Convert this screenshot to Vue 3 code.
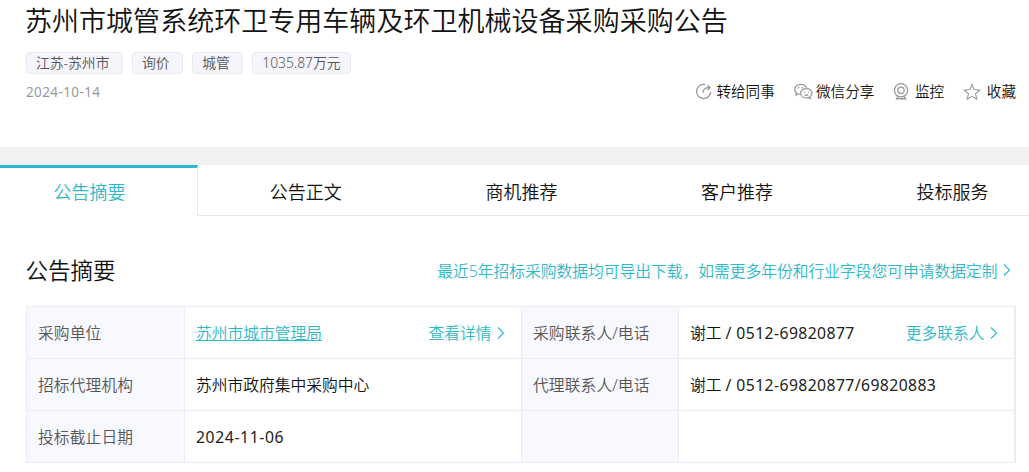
<template>
  <div class="page">
    <header class="notice">
      <h1>苏州市城管系统环卫专用车辆及环卫机械设备采购采购公告</h1>
      <div class="tags">
        <span v-for="tag in tags" :key="tag" class="tag">{{ tag }}</span>
      </div>
      <div class="meta">
        <span class="date">2024-10-14</span>
        <div class="actions">
          <a class="action share">
            <svg width="17" height="17" viewBox="0 0 17 17">
              <path d="M10.2 1.5A7.1 7.1 0 1 0 15.7 8.9" />
              <path d="M8 9.8C8 6.5 9.8 4.6 14.6 4.4M12.2 2.2l2.8 2.2-2.2 2.6" />
            </svg>
            <span>转给同事</span>
          </a>
          <a class="action wechat">
            <svg width="19" height="17" viewBox="0 0 19 17">
              <path d="M6.3 11.3c-.8 0-1.4-.1-2-.3L2.1 12l.5-2C1.4 9.1.8 7.8.8 6.4.8 3.6 3.4 1.3 6.7 1.3c2.9 0 5.2 1.6 5.8 3.9" />
              <path d="M12.3 5.6c-3.2 0-5.7 2-5.7 4.6s2.5 4.6 5.7 4.6c.7 0 1.4-.1 2-.3l2 1-.5-1.7c1.3-.9 2.2-2.1 2.2-3.6 0-2.6-2.5-4.6-5.7-4.6z" />
              <path d="M4.6 4v1.6M8.5 4v1.6M10.4 8.4v1.4M14.3 8.4v1.4M10.5 11.6q1.8 1.3 3.6 0" />
            </svg>
            <span>微信分享</span>
          </a>
          <a class="action watch">
            <svg width="16" height="17" viewBox="0 0 16 17">
              <circle cx="8" cy="7.3" r="6.6" />
              <circle cx="8" cy="7.3" r="3.2" />
              <path d="M5 13.4l-1.5 2.3h9L11 13.4M3 15.9h10" />
            </svg>
            <span>监控</span>
          </a>
          <a class="action star">
            <svg width="18" height="17" viewBox="0 0 18 17">
              <path d="M9 1.5l2.1 5.1 5.6.5-4.2 3.7 1.3 5.3L9 13.3l-4.8 2.8 1.3-5.3-4.2-3.7 5.6-.5z" />
            </svg>
            <span>收藏</span>
          </a>
        </div>
      </div>
    </header>

    <nav class="tabs">
      <a v-for="(tab, i) in tabs" :key="tab" :class="['tab', { active: i === 0 }]">{{ tab }}</a>
    </nav>

    <section class="summary">
      <div class="summary-head">
        <h2>公告摘要</h2>
        <a class="more">
          最近5年招标采购数据均可导出下载，如需更多年份和行业字段您可申请数据定制
          <svg class="arrow" width="8" height="14" viewBox="0 0 8 14"><path d="M1 1.5L6.5 7 1 12.5" /></svg>
        </a>
      </div>
      <div class="table">
        <template v-for="(row, i) in rows" :key="i">
          <template v-for="(cell, j) in row" :key="j">
            <div class="cell label">{{ cell.label }}</div>
            <div class="cell value">
              <span v-if="cell.name">{{ cell.name }} <span class="phone">/ {{ cell.phone }}</span></span>
              <span v-else :class="cell.type">{{ cell.value }}</span>
              <a v-if="cell.more" class="more">
                {{ cell.more }}
                <svg class="arrow" width="8" height="14" viewBox="0 0 8 14"><path d="M1 1.5L6.5 7 1 12.5" /></svg>
              </a>
            </div>
          </template>
        </template>
      </div>
    </section>
  </div>
</template>

<script setup>
const tags = ["江苏-苏州市", "询价", "城管", "1035.87万元"];
const tabs = ["公告摘要", "公告正文", "商机推荐", "客户推荐", "投标服务"];

const rows = [
  [
    { label: "采购单位", value: "苏州市城市管理局", type: "link", more: "查看详情" },
    { label: "采购联系人/电话", name: "谢工", phone: "0512-69820877", more: "更多联系人" },
  ],
  [
    { label: "招标代理机构", value: "苏州市政府集中采购中心" },
    { label: "代理联系人/电话", name: "谢工", phone: "0512-69820877/69820883" },
  ],
  [
    { label: "投标截止日期", value: "2024-11-06", type: "day" },
    { label: "", value: "" },
  ],
];
</script>

<style>
body {
  margin: 0;
  background: #fff;
}
</style>

<style scoped>
.page {
  width: 1029px;
  height: 472px;
  overflow: hidden;
  box-sizing: border-box;
  background: #fff;
  color: #111;
  font-family: "Noto Sans", "Noto Sans CJK SC", sans-serif;
  font-weight: 350;
  font-size: 15.75px;
}
h1, h2 {
  margin: 0 0 0 -1px;
  font-weight: 350;
}
svg {
  fill: none;
  stroke: #999;
  stroke-width: 1.3;
  flex: none;
}
.notice {
  height: 147px;
  padding: 0 13px 0 26px;
  box-sizing: border-box;
}
h1 {
  height: 52px;
  line-height: 42px;
  font-size: 27px;
  letter-spacing: 0.03px;
  white-space: nowrap;
}
.tags {
  display: flex;
  gap: 9.2px;
}
.tag {
  height: 22px;
  padding: 0 12.4px 0 9px;
  box-sizing: border-box;
  border: 1px solid #e9e9ee;
  border-radius: 4px;
  background: #f5f5fb;
  color: #555;
  font-size: 13.8px;
  line-height: 20px;
}
.tag:last-child {
  padding-right: 9px;
}
.meta {
  display: flex;
  justify-content: space-between;
  height: 34px;
  align-items: center;
}
.date {
  padding-top: 1px;
  color: #999;
  font-size: 13.5px;
  font-weight: 400;
  letter-spacing: 0.4px;
}
.actions {
  display: flex;
  gap: 19.1px;
  font-size: 14.625px;
}
.action {
  display: flex;
  align-items: center;
  gap: 4px;
}
.action span {
  margin-bottom: 2px;
}
.wechat {
  gap: 3px;
}
.watch, .star {
  gap: 5.5px;
}
.star svg {
  stroke-width: 1.1;
}
.tabs {
  display: grid;
  grid-template-columns: 198px repeat(4, 215.6px);
  grid-template-rows: 51px;
  border-top: 18px solid #f1f1f4;
}
.tab {
  box-sizing: border-box;
  border-bottom: 1px solid #e9e9ec;
  padding-top: 3px;
  font-size: 18px;
  line-height: 48px;
  text-align: center;
}
.tab.active {
  padding: 0 18px 0 0;
  border-top: 3px solid #2fb8c9;
  border-right: 1px solid #e9e9ec;
  border-bottom: 0;
  color: #2fb8c9;
}
.summary {
  padding: 0 14px 0 26px;
}
.summary-head {
  display: flex;
  justify-content: space-between;
  align-items: center;
  height: 90px;
  padding: 18px 4px 0 0;
  box-sizing: border-box;
}
h2 {
  margin: 0 0 1px -0.5px;
  font-size: 22.5px;
}
.more {
  display: flex;
  align-items: center;
  gap: 5.5px;
  color: #2fb8c9;
  white-space: nowrap;
}
.arrow {
  stroke: #2fb8c9;
  stroke-width: 1.1;
}
.table {
  display: grid;
  grid-template-columns: 158px 337px 157px 336px;
  grid-auto-rows: 52px;
  border: solid #ebebf3;
  border-width: 1px 1px 0 1px;
  width: 988px;
}
.cell {
  display: flex;
  align-items: center;
  justify-content: space-between;
  box-sizing: border-box;
  padding: 0 16px 0 11px;
  border-right: 1px solid #ebebf3;
  border-bottom: 1px solid #ebebf3;
  white-space: nowrap;
}
.label {
  background: #f8f9fe;
  color: #555;
  letter-spacing: 0.1px;
}
.link {
  color: #2fb8c9;
  text-decoration: underline;
}
.phone {
  color: #222;
  font-weight: 400;
  letter-spacing: 0.4px;
}
.day {
  color: #222;
  font-weight: 400;
  letter-spacing: 0.6px;
}
</style>
